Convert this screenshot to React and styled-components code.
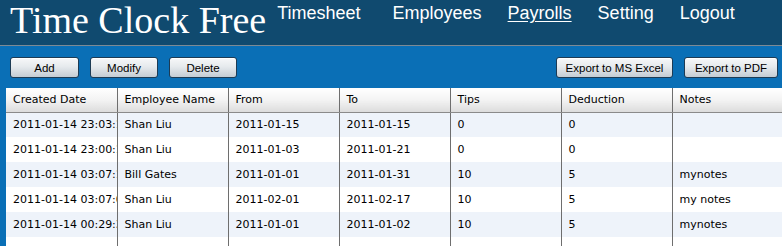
import React from 'react'
import styled, { createGlobalStyle } from 'styled-components'

const GlobalStyle = createGlobalStyle`
  html, body {
    margin: 0;
    padding: 0;
    background: #0a6fb6;
    overflow: hidden;
  }
  body {
    font-family: "Liberation Sans", Arial, sans-serif;
  }
`

const Page = styled.div`
  width: 782px;
  height: 246px;
  overflow: hidden;
  background: #0a6fb6;
`

const Header = styled.div`
  display: flex;
  align-items: flex-start;
  height: 45px;
  background: #104a6f;
  border-bottom: 1px solid #7d8a94;
`

const Title = styled.h1`
  margin: 0;
  padding: 1px 0 0 10px;
  font-family: "Liberation Serif", "Times New Roman", serif;
  font-weight: normal;
  font-size: 38px;
  line-height: 38px;
  color: #fff;
  white-space: nowrap;
`

const Nav = styled.nav`
  display: flex;
  gap: 26px;
  margin-left: 11px;
  padding-top: 4px;
`

const NavLink = styled.a`
  font-size: 18px;
  line-height: 18px;
  color: #fff;
  text-decoration: ${p => (p.$active ? 'underline' : 'none')};
  text-underline-offset: 2px;
  white-space: nowrap;
  margin-right: ${p => (p.$wide ? '6px' : '0')};
`

const Toolbar = styled.div`
  display: flex;
  justify-content: space-between;
  padding: 11px 4px 10px 10px;
`

const ButtonGroup = styled.div`
  display: flex;
  gap: 11px;
`

const Button = styled.button`
  width: ${p => p.$w}px;
  height: 21px;
  padding: 0;
  font-family: "Liberation Sans", Arial, sans-serif;
  font-size: 11.5px;
  color: #000;
  border: 1px solid #1d3b54;
  border-radius: 3px;
  background: linear-gradient(#f7f8f9 0%, #e6eaed 45%, #c4ccd3 100%);
  box-shadow: inset 0 1px 0 #fff;
`

const Table = styled.table`
  margin-left: 6px;
  width: 777px;
  border-collapse: collapse;
  table-layout: fixed;
  background: #fff;
  font-family: "DejaVu Sans", Verdana, sans-serif;
  font-size: 11px;
  color: #000;
`

const HeadCell = styled.th`
  width: 111px;
  height: 24px;
  padding: 0 0 0 7px;
  box-sizing: border-box;
  text-align: left;
  font-weight: normal;
  white-space: nowrap;
  overflow: hidden;
  background: linear-gradient(#ffffff 0%, #f3f3f3 50%, #dcdcdc 100%);
  border-right: 1px solid #6e6e6e;
  border-bottom: 1px solid #8a8a8a;
`

const Row = styled.tr`
  background: ${p => (p.$alt ? '#eef3fa' : '#ffffff')};
`

const Cell = styled.td`
  height: 25px;
  padding: 0 0 0 7px;
  box-sizing: border-box;
  white-space: nowrap;
  overflow: hidden;
  border-right: 1px solid #6e6e6e;
`

const FillCell = styled.td`
  height: 30px;
  border-right: 1px solid #6e6e6e;
`

const columns = ['Created Date', 'Employee Name', 'From', 'To', 'Tips', 'Deduction', 'Notes']

const payrolls = [
  ['2011-01-14 23:03:15', 'Shan Liu', '2011-01-15', '2011-01-15', '0', '0', ''],
  ['2011-01-14 23:00:11', 'Shan Liu', '2011-01-03', '2011-01-21', '0', '0', ''],
  ['2011-01-14 03:07:12', 'Bill Gates', '2011-01-01', '2011-01-31', '10', '5', 'mynotes'],
  ['2011-01-14 03:07:01', 'Shan Liu', '2011-02-01', '2011-02-17', '10', '5', 'my notes'],
  ['2011-01-14 00:29:33', 'Shan Liu', '2011-01-01', '2011-01-02', '10', '5', 'mynotes'],
]

function App() {
  return (
    <Page>
      <GlobalStyle />
      <Header>
        <Title>Time Clock Free</Title>
        <Nav>
          <NavLink $wide>Timesheet</NavLink>
          <NavLink>Employees</NavLink>
          <NavLink $active>Payrolls</NavLink>
          <NavLink>Setting</NavLink>
          <NavLink>Logout</NavLink>
        </Nav>
      </Header>
      <Toolbar>
        <ButtonGroup>
          <Button $w={69}>Add</Button>
          <Button $w={68}>Modify</Button>
          <Button $w={68}>Delete</Button>
        </ButtonGroup>
        <ButtonGroup>
          <Button $w={117}>Export to MS Excel</Button>
          <Button $w={94}>Export to PDF</Button>
        </ButtonGroup>
      </Toolbar>
      <Table>
        <thead>
          <tr>
            {columns.map(c => (
              <HeadCell key={c}>{c}</HeadCell>
            ))}
          </tr>
        </thead>
        <tbody>
          {payrolls.map((row, i) => (
            <Row key={i} $alt={i % 2 === 0}>
              {row.map((v, j) => (
                <Cell key={j}>{v}</Cell>
              ))}
            </Row>
          ))}
          <Row>
            {columns.map(c => (
              <FillCell key={c} />
            ))}
          </Row>
        </tbody>
      </Table>
    </Page>
  )
}

export default App
